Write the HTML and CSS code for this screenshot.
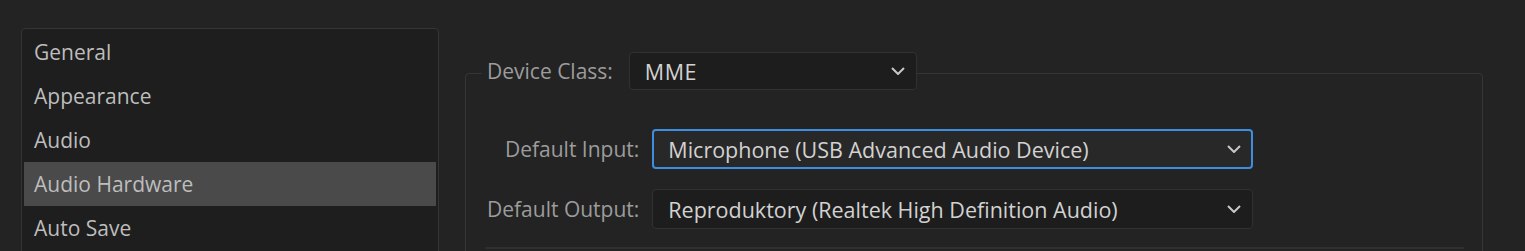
FILE: index.html
```html
<!DOCTYPE html>
<html lang="en">
<head>
  <meta charset="UTF-8">
  <title>Preferences - Audio Hardware</title>
  <link rel="stylesheet" href="styles.css">
</head>
<body>
  <div class="prefs">
    <ul class="nav-list">
      <li>General</li>
      <li>Appearance</li>
      <li>Audio</li>
      <li class="active">Audio Hardware</li>
      <li>Auto Save</li>
    </ul>

    <div class="pane">
      <fieldset class="group">
        <legend>
          <span class="legend-label">Device Class:</span>
          <div class="dropdown small">
            <span>MME</span>
            <svg class="chevron" viewBox="0 0 14 8"><path d="M1 1l6 6 6-6"/></svg>
          </div>
        </legend>

        <div class="rows">
          <label>Default Input:</label>
          <div class="dropdown focused">
            <span>Microphone (USB Advanced Audio Device)</span>
            <svg class="chevron" viewBox="0 0 14 8"><path d="M1 1l6 6 6-6"/></svg>
          </div>

          <label>Default Output:</label>
          <div class="dropdown">
            <span>Reproduktory (Realtek High Definition Audio)</span>
            <svg class="chevron" viewBox="0 0 14 8"><path d="M1 1l6 6 6-6"/></svg>
          </div>
        </div>

        <div class="divider"></div>
      </fieldset>
    </div>
  </div>
</body>
</html>
```

FILE: styles.css
```css
/* Base */
* {
  margin: 0;
  padding: 0;
  box-sizing: border-box;
}

body {
  font-family: 'Open Sans', 'Noto Sans', sans-serif;
  background-color: #232323;
  color: #c4c4c4;
  height: 100vh;
  overflow: hidden;
}

.prefs {
  display: flex;
  align-items: flex-start;
  padding: 28px 0 0 21px;
}

/* Left category list */
.nav-list {
  list-style: none;
  width: 418px;
  height: 260px;
  padding: 1px 2px;
  background-color: #1e1e1e;
  border: 1px solid #353535;
  border-radius: 4px;
}

.nav-list li {
  height: 44px;
  line-height: 44px;
  padding-left: 10px;
  font-size: 21px;
  color: #bdbdbd;
}

.nav-list li.active {
  background-color: #4a4a4a;
}

/* Right pane */
.pane {
  margin-left: 26px;
  margin-top: 24px;
}

.group {
  width: 1018px;
  height: 300px;
  border: 1px solid #363636;
  border-radius: 4px;
  padding: 0 18px 0 21px;
}

.group legend {
  display: flex;
  align-items: center;
  margin-left: -5px;
  padding: 0 0 4px 5px;
}

.legend-label {
  font-size: 21px;
  color: #9c9c9c;
  margin-right: 16px;
}

.dropdown {
  display: flex;
  align-items: center;
  justify-content: space-between;
  width: 601px;
  height: 40px;
  padding: 0 11px 0 15px;
  background-color: #1d1d1d;
  border: 1px solid #313131;
  border-radius: 4px;
  font-size: 21.5px;
  color: #d2d2d2;
}

.dropdown.small {
  width: 288px;
  height: 38px;
  letter-spacing: 0.5px;
}

.dropdown.focused {
  background-color: #282828;
  border: 2px solid #3d8ee0;
  padding-left: 14px;
  padding-right: 10px;
}

.chevron {
  width: 14px;
  height: 8px;
  fill: none;
  stroke: #c8c8c8;
  stroke-width: 2;
}

.rows {
  display: grid;
  grid-template-columns: max-content 601px;
  justify-content: start;
  column-gap: 13px;
  row-gap: 20px;
  align-items: center;
  margin-top: 35px;
}

.rows label {
  text-align: right;
  font-size: 21px;
  color: #9c9c9c;
}

.divider {
  height: 2px;
  background-color: #2f2f2f;
  margin: 18px 0 0 -2px;
}
```
